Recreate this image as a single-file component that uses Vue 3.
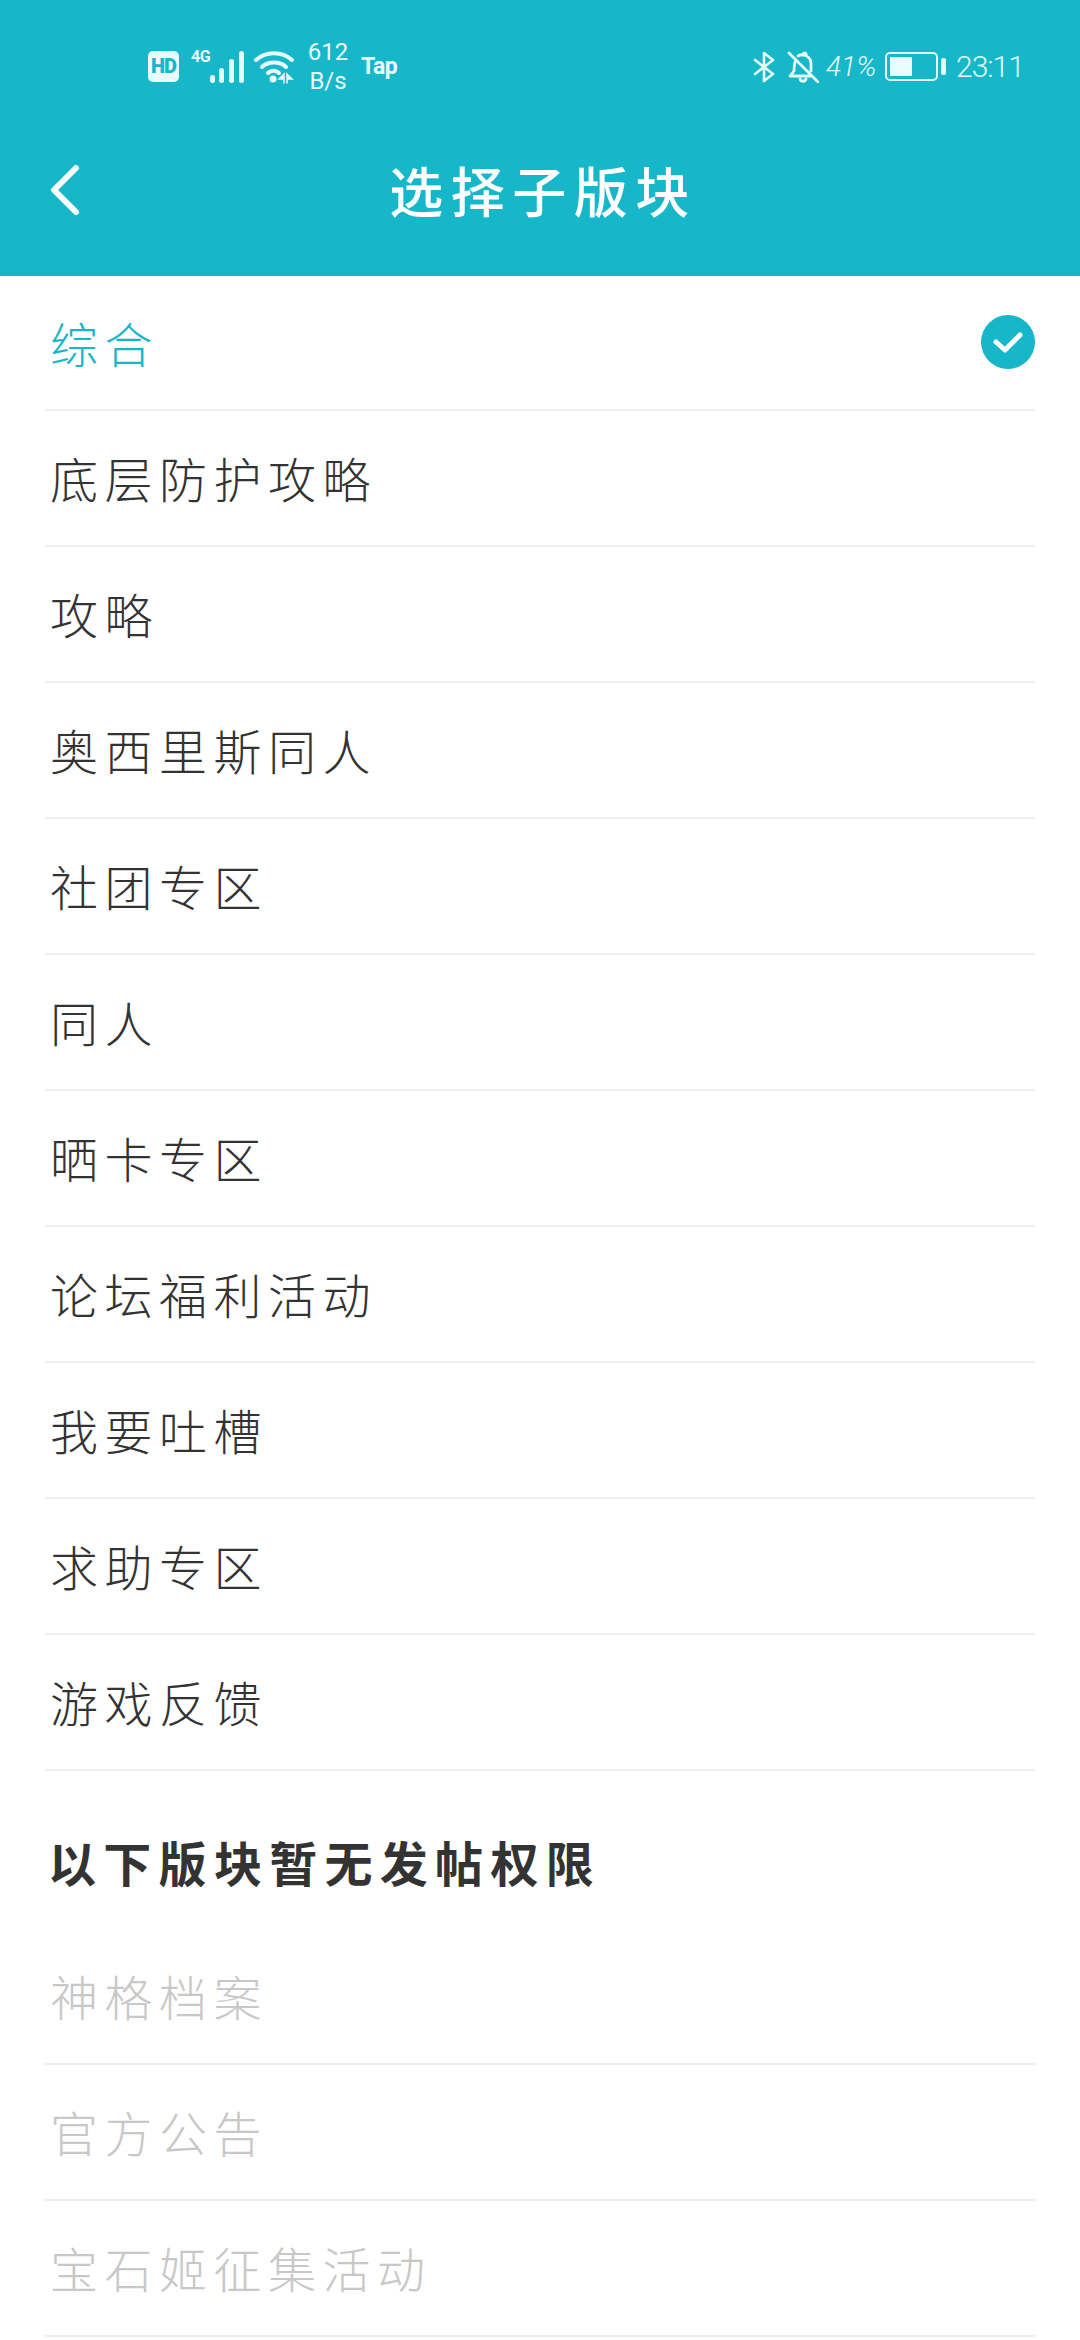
<script setup>
const forums = [
  '综合',
  '底层防护攻略',
  '攻略',
  '奥西里斯同人',
  '社团专区',
  '同人',
  '晒卡专区',
  '论坛福利活动',
  '我要吐槽',
  '求助专区',
  '游戏反馈'
]
const locked = ['神格档案', '官方公告', '宝石姬征集活动']
const selected = 0
</script>

<template>
  <div class="page">
    <header class="header">
      <div class="statusbar">
        <div class="status-left">
          <span class="hd">HD</span>
          <div class="signal">
            <span class="net">4G</span>
            <svg width="36" height="34" viewBox="0 0 36 34" fill="#e8fbfd">
              <rect x="1" y="25" width="5" height="8" rx="2.5" />
              <rect x="10" y="18" width="5" height="15" rx="2.5" />
              <rect x="20" y="9" width="5" height="24" rx="2.5" />
              <rect x="30" y="1" width="5" height="32" rx="2.5" />
            </svg>
          </div>
          <svg class="wifi" width="40" height="34" viewBox="0 0 40 34" fill="none" stroke="#e8fbfd" stroke-width="4" stroke-linecap="round">
            <path d="M2 10C12 1 28 1 38 10" />
            <path d="M8 17C14 11 26 11 32 17" />
            <path d="M14 23C17 20 22 20 25 23" />
            <circle cx="19" cy="29" r="3.5" fill="#e8fbfd" stroke="none" />
            <path d="M30 24l-5 5h5zM33 24l5 5h-5zM30 29v4M33 29v4" fill="#e8fbfd" stroke-width="1.5" />
          </svg>
          <div class="speed">
            <span>612</span>
            <span>B/s</span>
          </div>
          <span class="tap">Tap</span>
        </div>
        <div class="status-right">
          <svg width="22" height="32" viewBox="0 0 22 32" fill="none" stroke="#e8fbfd" stroke-width="2.6" stroke-linecap="round" stroke-linejoin="round">
            <path d="M2 9L20 23L11 30V2L20 9L2 23" />
          </svg>
          <svg class="bell" width="32" height="32" viewBox="0 0 32 32" fill="none" stroke="#e8fbfd" stroke-width="2.8" stroke-linecap="round" stroke-linejoin="round">
            <path d="M8 11C7 14 7 17 7 20L3 25H24" />
            <path d="M11 5C16 2 24 5 24 13V20" />
            <path d="M16 4C16 2 18 1 19 3" />
            <path d="M13 28C14 31 18 31 19 28" />
            <path d="M2 2L31 31" />
          </svg>
          <span class="battery-pct">41%</span>
          <div class="battery">
            <div class="battery-body">
              <div class="battery-fill" :style="{ width: '52%' }"></div>
            </div>
            <div class="battery-nub"></div>
          </div>
          <span class="clock">23:11</span>
        </div>
      </div>
      <div class="navbar">
        <svg class="back" width="30" height="50" viewBox="0 0 30 50" fill="none" stroke="#fff" stroke-width="6" stroke-linecap="round" stroke-linejoin="round">
          <path d="M26 3L4 25L26 47" />
        </svg>
        <h1 class="title">选择子版块</h1>
      </div>
    </header>

    <div class="list">
      <div
        v-for="(name, idx) in forums"
        :key="name"
        class="row"
        :class="{ active: idx === selected }"
      >
        <span>{{ name }}</span>
        <svg v-if="idx === selected" width="54" height="54" viewBox="0 0 54 54">
          <circle cx="27" cy="27" r="27" fill="#15b7c9" />
          <path d="M15 27L24 35L39 20" fill="none" stroke="#fff" stroke-width="5" stroke-linecap="round" stroke-linejoin="round" />
        </svg>
      </div>
    </div>

    <div class="section-title">以下版块暂无发帖权限</div>

    <div class="list">
      <div v-for="name in locked" :key="name" class="row disabled">
        <span>{{ name }}</span>
      </div>
    </div>
  </div>
</template>

<style>
html,
body {
  margin: 0;
  background: #fff;
}
</style>

<style scoped>
.page {
  width: 1080px;
  height: 2340px;
  overflow: hidden;
  background: #fff;
  font-family: "Noto Sans CJK SC", "Noto Sans", sans-serif;
}

.header {
  height: 276px;
  background: #15b7c9;
  color: #fff;
}

.statusbar {
  height: 133px;
  display: flex;
  justify-content: space-between;
  align-items: center;
  padding: 0 55px 0 148px;
  box-sizing: border-box;
  color: #e8fbfd;
  font-family: Roboto, sans-serif;
}

.status-left,
.status-right {
  display: flex;
  align-items: center;
}

.hd {
  width: 31px;
  height: 31px;
  border-radius: 5px;
  background: #e8fbfd;
  color: #15b7c9;
  font-size: 20px;
  font-weight: 900;
  line-height: 31px;
  text-align: center;
  letter-spacing: -1px;
}

.signal {
  display: flex;
  align-items: flex-end;
  margin-left: 12px;
  height: 34px;
}

.net {
  align-self: flex-start;
  width: 18px;
  font-size: 16px;
  font-weight: 700;
  line-height: 14px;
  letter-spacing: -0.5px;
  white-space: nowrap;
}

.wifi {
  margin-left: 9px;
}

.speed {
  display: flex;
  flex-direction: column;
  align-items: center;
  margin-left: 14px;
  font-size: 24px;
  line-height: 29px;
  width: 40px;
}

.tap {
  margin-left: 13px;
  font-size: 23px;
  font-weight: 700;
  letter-spacing: -0.5px;
}

.bell {
  margin-left: 12px;
}

.battery-pct {
  margin-left: 7px;
  font-size: 28px;
  font-weight: 300;
  font-style: italic;
  width: 49px;
  white-space: nowrap;
}

.battery {
  display: flex;
  align-items: center;
  margin-left: 10px;
}

.battery-body {
  width: 53px;
  height: 29px;
  box-sizing: border-box;
  border: 2px solid #e8fbfd;
  border-radius: 5px;
  padding: 3px;
}

.battery-fill {
  height: 100%;
  background: #e8fbfd;
}

.battery-nub {
  width: 5px;
  height: 17px;
  margin-left: 3px;
  border-radius: 2px;
  background: #e8fbfd;
}

.clock {
  margin-left: 10px;
  width: 69px;
  font-size: 30px;
  font-weight: 300;
  letter-spacing: -1px;
  white-space: nowrap;
}

.navbar {
  height: 114px;
  display: grid;
  grid-template-columns: 1fr auto 1fr;
  align-items: center;
  padding-left: 50px;
}

.back {
  grid-column: 1;
}

.title {
  grid-column: 2;
  margin: 0 44px 0 0;
  font-size: 54px;
  font-weight: 500;
  letter-spacing: 7.5px;
  line-height: 66px;
}

.list {
  margin: 0 45px;
}

.row {
  height: 136px;
  box-sizing: border-box;
  border-bottom: 2px solid #eeeeee;
  display: flex;
  justify-content: space-between;
  align-items: center;
  padding: 0 0 2px 5px;
  font-size: 48px;
  font-weight: 300;
  letter-spacing: 6.5px;
  color: #333;
}

.row.active {
  height: 135px;
  color: #15b7c9;
}

.row.disabled {
  color: #c8c8c8;
}

.section-title {
  height: 158px;
  box-sizing: border-box;
  padding: 21px 0 0 48px;
  display: flex;
  align-items: center;
  font-size: 48px;
  font-weight: 700;
  letter-spacing: 7.3px;
  color: #333;
}
</style>
